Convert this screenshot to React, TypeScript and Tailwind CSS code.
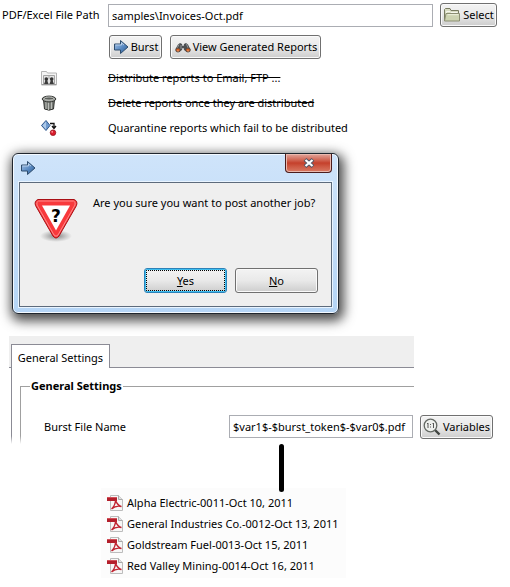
import type { ReactNode } from "react";

const buttonShape =
  "flex shrink-0 items-center justify-center rounded-[3px] border bg-linear-to-b from-[#f3f3f3] from-0% via-[#e9e9e9] via-50% to-[#cdcdcd] whitespace-nowrap";
const buttonBase = `${buttonShape} border-[#707070] shadow-[inset_0_0_0_1px_#fafafa]`;
const buttonFocused = `${buttonShape} border-[#2c82b8] shadow-[inset_0_0_0_1px_#3fbff0] outline-1 -outline-offset-3 outline-dotted outline-black`;

function BlueArrow({ id }: { id: string }) {
  return (
    <svg viewBox="0 0 16 16" className="size-4 shrink-0" aria-hidden="true">
      <defs>
        <linearGradient id={id} x1="0" y1="0" x2="1" y2="1">
          <stop offset="0" stopColor="#a9c6e8" />
          <stop offset="0.55" stopColor="#5a8ac2" />
          <stop offset="1" stopColor="#28588f" />
        </linearGradient>
      </defs>
      <path d="M1.500 5h6V1.500l7.500 6.500-7.500 6.500V11h-6z" fill={`url(#${id})`} stroke="#2f4d6d" strokeLinejoin="round" />
      <path d="M2.500 6h6V3.800l2.500 2.300" fill="none" stroke="#c9dcf1" strokeWidth="0.8" />
    </svg>
  );
}

function Binoculars() {
  return (
    <svg viewBox="0 0 18 16" className="h-4 w-[18px] shrink-0" aria-hidden="true">
      <path d="M4 5.500 6 4l2 1 .5 2h1l.5-2 2-1 2 1.500 2.500 5-3.500 2.500-3-2-.5-2H8.500l-.5 2-3 2L1.500 10z" fill="#4c4f52" />
      <path d="m5 5.500-2 4M12.500 5l1.500 4M7 6v4" stroke="#a4a8ab" strokeWidth="0.800" />
      <ellipse cx="4" cy="11" rx="2.300" ry="2" fill="#d35b20" stroke="#4a4744" strokeWidth="0.900" />
      <ellipse cx="14" cy="11" rx="2.300" ry="2" fill="#d35b20" stroke="#4a4744" strokeWidth="0.900" />
      <path d="M3 11.500q1 1 2 .3M13 11.500q1 1 2 .3" fill="none" stroke="#f4a36d" strokeWidth="0.800" />
    </svg>
  );
}

function FolderIcon() {
  return (
    <svg viewBox="0 0 18 16" className="h-4 w-[18px] shrink-0" aria-hidden="true">
      <path d="M1.500 14V2.500l1-1H7l1 2h7.500v3" fill="#d8dcc2" stroke="#777a5f" strokeLinejoin="round" />
      <path d="M3.500 6V4.500H7l1 1h6.500" fill="none" stroke="#f5f6ec" />
      <path d="M4 6.500h12.500v7.500h-15L3 6.500z" fill="#cdd3b1" stroke="#8b8e72" strokeLinejoin="round" />
      <path d="M4.500 7.700h11" stroke="#eff2df" />
    </svg>
  );
}

function PeopleFolder() {
  return (
    <svg viewBox="0 0 16 16" className="size-4" aria-hidden="true">
      <path d="M.5 15V1.500h5l1 1.500h9v12z" fill="#f4f4f4" stroke="#b4b4b4" />
      <path d="M2.500 14V5.500h11V14" fill="#e4e4e4" stroke="#a5a5a5" />
      <path d="M8 6v3" stroke="#aaa" />
      <circle cx="5.300" cy="9" r="1.800" fill="#333" />
      <circle cx="10.700" cy="9" r="1.800" fill="#333" />
      <path d="M3 14q1-1.500 1.300-4h2q.3 2.500 1.300 4zM8.400 14q1-1.500 1.300-4h2q.3 2.500 1.300 4z" fill="#3c3c3c" />
      <path d="M1 14.500h14" stroke="#999" />
    </svg>
  );
}

function TrashIcon() {
  return (
    <svg viewBox="0 0 16 16" className="size-4" aria-hidden="true">
      <path d="M2.500 4.500 3.500 14q4.500 2.300 9 0l1-9.500z" fill="#777a76" stroke="#30322f" />
      <path d="M5 7v7M7.500 7.500V15M10.500 7v7" stroke="#c2c5c0" strokeWidth="0.900" />
      <ellipse cx="8" cy="4" rx="6.800" ry="2.900" fill="#9fa29d" stroke="#343633" />
      <ellipse cx="8" cy="3.500" rx="4.500" ry="1.500" fill="#5a5d59" stroke="#d4d6d2" strokeWidth="0.700" />
    </svg>
  );
}

function QuarantineIcon() {
  return (
    <svg viewBox="0 0 16 16" className="size-4" aria-hidden="true">
      <path d="m5 .5 4 5-4 5-4.500-5z" fill="#6f9bd0" stroke="#31588b" />
      <path d="M5 1.500v8L1.500 5.500z" fill="#acc8e8" />
      <path d="M9 3.500h4V8M11 6l2 2.500L15 6" fill="none" stroke="#111" strokeWidth="1.300" />
      <circle cx="12" cy="12.700" r="2.800" fill="#db1c2c" stroke="#8d1019" strokeWidth="0.700" />
      <circle cx="11.200" cy="11.800" r="0.900" fill="#ff9a9f" />
    </svg>
  );
}

function WarningSign() {
  return (
    <svg viewBox="0 0 48 48" className="size-12 shrink-0" role="img" aria-label="Question">
      <defs>
        <radialGradient id="sign-shadow">
          <stop offset="0" stopColor="#555" stopOpacity="0.750" />
          <stop offset="1" stopColor="#777" stopOpacity="0" />
        </radialGradient>
      </defs>
      <ellipse cx="23" cy="41" rx="16" ry="6" fill="url(#sign-shadow)" />
      <path d="M5 4.500h36q4 1.500 2.500 6L26 41q-3 4-6 0L2.500 10.500Q1 6 5 4.500z" fill="#f8393c" stroke="#a90f14" />
      <path d="M5.500 6h35q2.500 1 1.500 4L25 40q-2 2.500-4 0L4 10q-1-3 1.500-4z" fill="none" stroke="#ff8b8b" />
      <path d="M9 10.500h28L23 35.500z" fill="#fff" />
      <text x="23" y="27" textAnchor="middle" fontFamily="'DejaVu Sans', sans-serif" fontWeight="700" fontSize="17" fill="#000">
        ?
      </text>
    </svg>
  );
}

function MagnifierIcon() {
  return (
    <svg viewBox="0 0 18 18" className="size-[18px] shrink-0" aria-hidden="true">
      <path d="m11.500 11.500 5 5" stroke="#414541" strokeWidth="2.400" />
      <circle cx="7.500" cy="7.500" r="6.300" fill="#eef0ed" stroke="#626762" strokeWidth="1.300" />
      <path d="M4 6l1-1v5M9.500 6l1-1v5M7.500 6v1M7.500 8.500v1" fill="none" stroke="#555" />
    </svg>
  );
}

function PdfIcon() {
  return (
    <svg viewBox="0 0 16 16" className="size-4 shrink-0" aria-hidden="true">
      <path d="M3.500.5h8l4 4v11h-12z" fill="#f7f7f7" stroke="#bcbcbc" />
      <path d="M11.500.5v4h4" fill="#e2e2e2" stroke="#a9a9a9" />
      <path d="M0 2h10v4H0z" fill="#b31f2b" />
      <path d="M0 2h10v1H0z" fill="#d2515a" />
      <path d="M8.500 5q1.500 5 6 6.500Q9 10 4.500 14q4-4 4-9z" fill="none" stroke="#c02431" strokeWidth="1.300" />
    </svg>
  );
}

function OptionRow({ icon, children }: { icon: ReactNode; children: ReactNode }) {
  return (
    <li className="flex h-[25px] items-center">
      <span className="flex w-[108px] shrink-0 pl-[41px]">{icon}</span>
      {children}
    </li>
  );
}

const files = [
  "Alpha Electric-0011-Oct 10, 2011",
  "General Industries Co.-0012-Oct 13, 2011",
  "Goldstream Fuel-0013-Oct 15, 2011",
  "Red Valley Mining-0014-Oct 16, 2011",
];

export default function App() {
  return (
    <main className="bg-white pb-[9px] font-['Noto_Sans','Open_Sans',sans-serif] text-[11px] leading-4 text-black">
      <section>
        <div className="flex items-center pt-[3px] pr-[13px]">
          <label htmlFor="path" className="w-[108px] shrink-0 pl-[2px] whitespace-nowrap">
            PDF/Excel File Path
          </label>
          <input
            id="path"
            defaultValue="samples\Invoices-Oct.pdf"
            className="h-[23px] min-w-0 flex-1 border border-[#abadb3] bg-white px-[3px]"
          />
          <button type="button" className={`${buttonBase} ml-[7px] h-6 w-[57px] gap-[2px]`}>
            <FolderIcon />
            Select
          </button>
        </div>
        <div className="mt-2 flex gap-2 pl-[109px]">
          <button type="button" className={`${buttonBase} h-6 w-[53px] gap-[2px]`}>
            <BlueArrow id="arrow-burst" />
            Burst
          </button>
          <button type="button" className={`${buttonBase} h-6 w-[151px] gap-px`}>
            <Binoculars />
            View Generated Reports
          </button>
        </div>
        <ul className="mt-[6px]">
          <OptionRow icon={<PeopleFolder />}>
            <s>Distribute reports to Email, FTP ...</s>
          </OptionRow>
          <OptionRow icon={<TrashIcon />}>
            <s>Delete reports once they are distributed</s>
          </OptionRow>
          <OptionRow icon={<QuarantineIcon />}>Quarantine reports which fail to be distributed</OptionRow>
        </ul>
      </section>

      <section
        role="dialog"
        aria-label="Confirm job"
        className="mt-[13px] ml-3 w-[327px] rounded-[6px] border border-[#20262e] bg-linear-to-b from-[#cfe4fa] to-[#b5d5f6] px-[6px] pb-[6px] shadow-[inset_0_0_0_1px_#f3f9ff,2px_4px_12px_3px_rgba(0,0,0,0.7)]"
      >
        <header className="flex h-7 items-start justify-between pl-px">
          <span className="pt-[6px]">
            <BlueArrow id="arrow-title" />
          </span>
          <button
            type="button"
            aria-label="Close"
            className="flex h-[19px] w-[47px] items-center justify-center rounded-b-[4px] border border-t-0 border-[#4b1c1c] bg-linear-to-b from-[#e0a59c] from-0% via-[#c5402b] via-50% to-[#d97a64] shadow-[inset_0_0_0_1px_#eab9ae]"
          >
            <svg viewBox="0 0 12 10" className="h-[10px] w-3" aria-hidden="true">
              <path d="m2 1.500 8 7M10 1.500l-8 7" stroke="#535666" strokeWidth="4" />
              <path d="m2.500 2 7 6M9.500 2l-7 6" stroke="#fff" strokeWidth="2.200" />
            </svg>
          </button>
        </header>
        <div className="border border-[#5d6b7c] bg-[#efefef] px-[13px] pt-3 pb-[13px] shadow-[0_0_0_1px_#e9f4ff]">
          <div className="flex h-[73px] items-start gap-3">
            <WarningSign />
            <p className="whitespace-nowrap">Are you sure you want to post another job?</p>
          </div>
          <div className="flex justify-end gap-2">
            <button type="button" className={`${buttonFocused} h-[25px] w-[83px]`}>
              <span><u>Y</u>es</span>
            </button>
            <button type="button" className={`${buttonBase} h-[25px] w-[83px]`}>
              <span><u>N</u>o</span>
            </button>
          </div>
        </div>
      </section>

      <section className="mt-[22px] grid grid-cols-[minmax(0,1fr)_auto] items-end gap-[6px] pr-[17px] pl-[9px]">
        <div>
          <div role="tablist" className="flex h-8 items-end border-b border-[#8b8b95] bg-[#efefef] pl-[2px]">
            <button
              type="button"
              role="tab"
              aria-selected="true"
              className="-mb-px h-6 w-[99px] border border-b-0 border-[#8b8b95] bg-white pt-[2px] whitespace-nowrap"
            >
              General Settings
            </button>
          </div>
          <div role="tabpanel" className="relative ml-[2px] border-l border-[#8b8b95] pt-[10px] pl-2">
            <fieldset className="min-w-0 border-t border-l border-[#a0a0a0] pl-[9px]">
              <legend className="px-px font-bold">General Settings</legend>
              <div className="flex h-[50px] items-start pt-[21px] pr-px pl-[14px]">
                <label htmlFor="name" className="flex-1 pt-1 whitespace-nowrap">
                  Burst File Name
                </label>
                <input
                  id="name"
                  defaultValue="$var1$-$burst_token$-$var0$.pdf"
                  className="h-[23px] w-[184px] border border-[#abadb3] bg-white px-[3px]"
                />
              </div>
            </fieldset>
            <div className="absolute bottom-0 -left-px h-2 w-[11px] bg-linear-to-b from-transparent to-white" />
          </div>
        </div>
        <button type="button" className={`${buttonBase} mb-[5px] h-6 w-[73px] gap-[2px]`}>
          <MagnifierIcon />
          Variables
        </button>
      </section>

      <div className="relative -mb-1 ml-[279px] h-12 w-[5px] rounded-full bg-black" />
      <ul className="ml-[101px] w-[245px] bg-[#fcfcfc] pt-[4px] pb-[2px] pl-[6px]">
        {files.map((file) => (
          <li key={file} className="flex h-[21px] items-center gap-1 whitespace-nowrap">
            <PdfIcon />
            {file}
          </li>
        ))}
      </ul>
    </main>
  );
}
